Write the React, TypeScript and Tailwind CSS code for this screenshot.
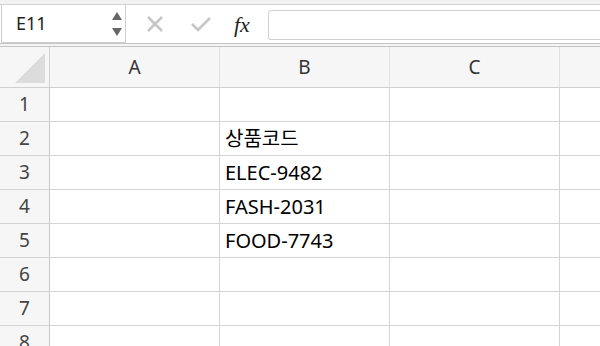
const columns = ['A', 'B', 'C'];
const rows: { n: number; b: string }[] = [
  { n: 1, b: '' },
  { n: 2, b: '상품코드' },
  { n: 3, b: 'ELEC-9482' },
  { n: 4, b: 'FASH-2031' },
  { n: 5, b: 'FOOD-7743' },
  { n: 6, b: '' },
  { n: 7, b: '' },
  { n: 8, b: '' },
];

const font = { fontFamily: '"Noto Sans", "Noto Sans CJK KR", sans-serif' };

export default function App() {
  return (
    <div className="h-[346px] w-[600px] overflow-hidden bg-white" style={font}>
      <FormulaBar />
      <div className="flex h-[41px] border-b border-[#d0d0d0] bg-[#f6f6f6]">
        <div className="flex w-[50px] shrink-0 items-end justify-end border-r border-[#d0d0d0] pb-[4px] pr-[4px]">
          <svg width="30" height="30" viewBox="0 0 30 30">
            <polygon points="30,0 30,30 0,30" fill="#dcdcdc" />
          </svg>
        </div>
        {columns.map((c) => (
          <div key={c} className="flex w-[170px] shrink-0 items-center justify-center border-r border-[#e2e2e2] text-[19px] text-[#333]">
            {c}
          </div>
        ))}
        <div className="flex-1" />
      </div>
      {rows.map((r) => (
        <div key={r.n} className="flex h-[34px] border-b border-[#d4d4d4]">
          <div className="flex w-[50px] shrink-0 items-center justify-center border-r border-[#c8c8c8] bg-[#f6f6f6] text-[19px] text-[#444]">
            {r.n}
          </div>
          <div className="w-[170px] shrink-0 border-r border-[#d4d4d4]" />
          <div className="flex w-[170px] shrink-0 items-center border-r border-[#d4d4d4] pl-[5px] text-[20px] text-black">
            {r.b}
          </div>
          <div className="w-[170px] shrink-0 border-r border-[#d4d4d4]" />
          <div className="flex-1" />
        </div>
      ))}
    </div>
  );
}

function FormulaBar() {
  return (
    <div className="bg-[#f2f2f2]">
      <div className="h-[5px] border-b border-[#d2d2d2]" />
      <div className="flex h-[38px] items-stretch bg-white">
        <div className="ml-[1px] flex w-[125px] items-center justify-between border border-t-0 border-[#cfcfcf] pl-[14px] pr-[2px]">
          <span className="text-[18px] text-[#222]">E11</span>
          <svg width="12" height="26" viewBox="0 0 12 26">
            <polygon points="6,1 11,9 1,9" fill="#666" />
            <polygon points="1,17 11,17 6,25" fill="#666" />
          </svg>
        </div>
        <div className="flex w-[142px] items-center pl-[20px]">
          <svg width="18" height="18" viewBox="0 0 18 18" className="mr-[26px]">
            <path d="M2 2 L16 16 M16 2 L2 16" stroke="#c6c6c6" strokeWidth="2.6" fill="none" />
          </svg>
          <svg width="22" height="16" viewBox="0 0 22 16" className="mr-[22px]">
            <path d="M2 8 L8 14 L20 2" stroke="#c6c6c6" strokeWidth="2.6" fill="none" />
          </svg>
          <span className="text-[22px] italic text-[#222]" style={{ fontFamily: '"Liberation Serif", serif' }}>
            fx
          </span>
        </div>
        <div className="flex-1 pt-[5px] pb-[3px]">
          <div className="h-full rounded-l-[3px] border border-r-0 border-[#d2d2d2] bg-white" />
        </div>
      </div>
      <div className="h-[4px] border-y border-[#c4c4c4] bg-[#f4f4f4]" />
    </div>
  );
}
